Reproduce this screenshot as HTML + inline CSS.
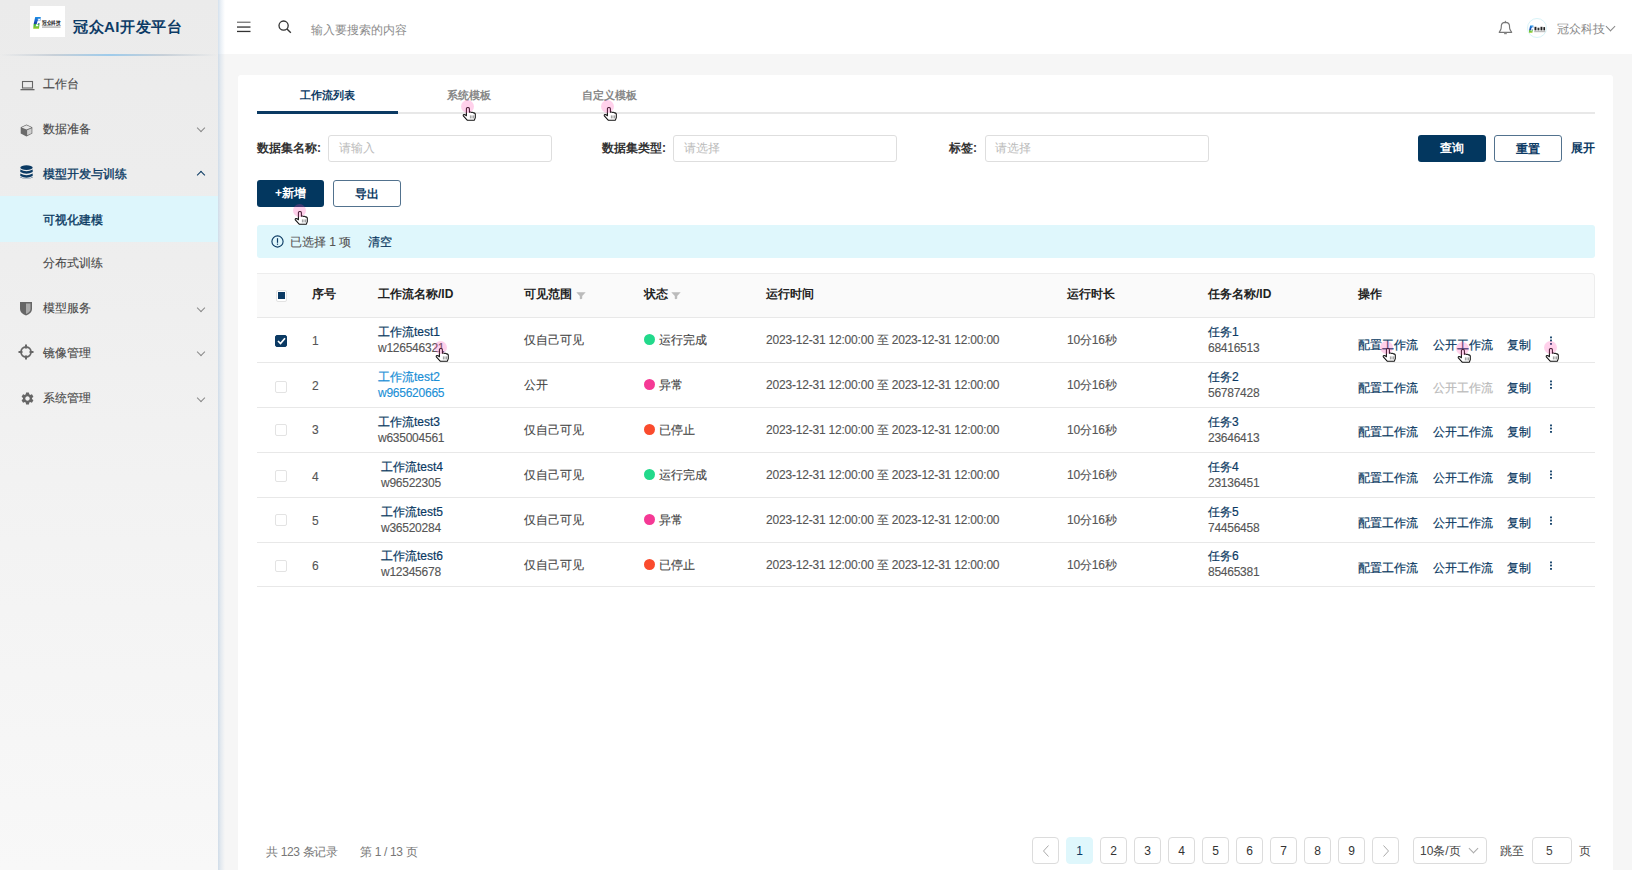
<!DOCTYPE html>
<html><head><meta charset="utf-8"><style>
*{box-sizing:border-box;margin:0;padding:0}
html,body{width:1632px;height:870px;overflow:hidden}
body{position:relative;background:#f6f6f6;font-family:"Liberation Sans",sans-serif;font-size:12px;color:#333}
.a{position:absolute;white-space:nowrap;line-height:12px;font-size:12px}
.m{-webkit-text-stroke:0.2px currentColor}
.m2{-webkit-text-stroke:0.12px currentColor}
#side{position:absolute;left:0;top:0;width:218px;height:870px;background:linear-gradient(to bottom,#ebebeb 0%,#eeeeee 30%,#f2f2f2 55%,#f8f8f8 100%)}
#sideshadow{position:absolute;left:218px;top:0;width:7px;height:870px;background:linear-gradient(to right,rgba(170,195,220,.5),rgba(190,208,226,.32) 40%,rgba(230,235,240,0))}
#hdr{position:absolute;left:218px;top:0;width:1414px;height:54px;background:#fff}
#card{position:absolute;left:238px;top:75px;width:1375px;height:800px;background:#fff;border-radius:3px}
.chev{position:absolute;width:6px;height:6px;border-right:1px solid #aaa;border-bottom:1px solid #aaa}
.inp{position:absolute;height:27px;width:224px;border:1px solid #dedede;border-radius:3px;background:#fff}
.btn{position:absolute;height:27px;border-radius:3px;text-align:center;font-size:12px;font-weight:bold;line-height:27px;white-space:nowrap}
.pri{background:#03375f;color:#fff}
.out{background:#fff;border:1px solid #52728e;color:#0b3a63;line-height:26px}
.rowl{position:absolute;left:257px;width:1338px;height:1px;background:#e8e8e8}
.th{font-weight:bold;color:#222}
.cb{position:absolute;width:12px;height:12px;border:1px solid #e3e3e3;border-radius:2px;background:#fff}
.dot{position:absolute;width:11px;height:11px;border-radius:50%}
.pg{position:absolute;top:837px;width:27px;height:27px;border:1px solid #dcdcdc;border-radius:4px;background:#fff;text-align:center;line-height:26px;font-size:12px;color:#333}
.cur{position:absolute;width:13px;height:13px;border-radius:50%;background:rgba(255,64,173,.24)}
</style></head><body>
<div id="side">
<div style="position:absolute;left:30px;top:6px;width:35px;height:31px;background:#fff"></div>
<svg style="position:absolute;left:30px;top:6px" width="35" height="31" viewBox="0 0 35 31">
<defs><linearGradient id="lg1" x1="0" y1="0" x2="0" y2="1"><stop offset="0" stop-color="#1a90e8"/><stop offset=".55" stop-color="#1b3fa8"/><stop offset=".56" stop-color="#28a84a"/><stop offset="1" stop-color="#9fd02a"/></linearGradient></defs>
<path d="M5.2 11 H10.8 L10.3 14.8 H7.6 L7.2 17.3 H9.6 L9 22.8 H3.2 L3.6 18.2 Z" fill="url(#lg1)"/>
<path d="M7.8 13.2 H9.6 L6.4 19.6 H8.3" stroke="#fff" stroke-width="1.1" fill="none"/>
<text x="12" y="18.8" font-size="6.2" font-weight="bold" fill="#2a2a2a" textLength="18.5" lengthAdjust="spacingAndGlyphs">冠众科技</text>
<rect x="12" y="20.3" width="18.5" height="1.6" fill="#888" opacity=".55"/>
</svg>
<div class="a" style="left:73px;top:19px;font-size:15px;line-height:15px;font-weight:bold;color:#0d3b66;letter-spacing:0.5px">冠众AI开发平台</div>
<div style="position:absolute;left:0;top:54px;width:218px;height:2px;background:linear-gradient(to right,rgba(200,210,220,0) 0%,rgba(170,185,200,.55) 25%,rgba(150,200,235,.9) 50%,rgba(170,185,200,.55) 75%,rgba(200,210,220,0) 100%)"></div>
<div style="position:absolute;left:0;top:196px;width:218px;height:46px;background:#ddf6fc"></div>
<div class="a m2" style="left:43px;top:78px;color:#484848">工作台</div>
<svg style="position:absolute;left:20px;top:80px" width="15" height="11" viewBox="0 0 15 11"><rect x="2.5" y="1.5" width="10" height="6.5" fill="none" stroke="#666" stroke-width="1.1"/><rect x="0.5" y="9" width="14" height="1.3" fill="#666"/></svg>
<div class="a m2" style="left:43px;top:123px;color:#484848">数据准备</div>
<svg style="position:absolute;left:20px;top:124px" width="13" height="13" viewBox="0 0 13 13"><path d="M6.5 0.6 L12.3 3.3 V9.6 L6.5 12.4 L0.7 9.6 V3.3 Z" fill="#6a6a6a"/><path d="M1.6 3.4 L6.5 1.2 L11.4 3.4 L6.5 5.6 Z" fill="#e6e6e6"/><path d="M7.1 6.3 L11.6 4.2 V9.2 L7.1 11.3 Z" fill="#d0d0d0"/></svg>
<div class="chev" style="left:198px;top:125.0px;transform:rotate(45deg);border-color:#8a8a8a"></div>
<div class="a" style="left:43px;top:168px;color:#0b3a63;-webkit-text-stroke:0.35px #0b3a63">模型开发与训练</div>
<svg style="position:absolute;left:20px;top:165px" width="13" height="15" viewBox="0 0 13 15"><ellipse cx="6.5" cy="2.6" rx="6.2" ry="2.3" fill="#0b3a63"/><path d="M0.3 4.5 Q6.5 8 12.7 4.5 V7 Q6.5 10.3 0.3 7 Z" fill="#0b3a63"/><path d="M0.3 8.5 Q6.5 12 12.7 8.5 V11 Q6.5 14.3 0.3 11 Z" fill="#0b3a63"/><path d="M0.3 12 Q6.5 15.3 12.7 12 V12.5 Q6.5 15.3 0.3 12.5 Z" fill="#0b3a63"/></svg>
<div class="chev" style="left:198px;top:171.5px;transform:rotate(225deg);border-color:#0b3a63;border-width:1.3px"></div>
<div class="a" style="left:43px;top:214px;color:#0b3a63;-webkit-text-stroke:0.35px #0b3a63">可视化建模</div>
<div class="a m2" style="left:43px;top:257px;color:#484848">分布式训练</div>
<div class="a m2" style="left:43px;top:302px;color:#484848">模型服务</div>
<svg style="position:absolute;left:19px;top:301px" width="14" height="15" viewBox="0 0 14 15"><path d="M1 1 H13 V8 Q13 12 7 14.5 Q1 12 1 8 Z" fill="#666"/><path d="M7 2.5 H11.5 V8 Q11.5 11 7 13 Z" fill="#aaa"/></svg>
<div class="chev" style="left:198px;top:304.5px;transform:rotate(45deg);border-color:#8a8a8a"></div>
<div class="a m2" style="left:43px;top:347px;color:#484848">镜像管理</div>
<svg style="position:absolute;left:18px;top:344px" width="16" height="16" viewBox="0 0 16 16"><circle cx="8" cy="8" r="5" fill="none" stroke="#666" stroke-width="1.8"/><rect x="7" y="0.5" width="2" height="4" fill="#666"/><rect x="7" y="11.5" width="2" height="4" fill="#666"/><rect x="0.5" y="7" width="4" height="2" fill="#666"/><rect x="11.5" y="7" width="4" height="2" fill="#666"/></svg>
<div class="chev" style="left:198px;top:349.0px;transform:rotate(45deg);border-color:#8a8a8a"></div>
<div class="a m2" style="left:43px;top:392px;color:#484848">系统管理</div>
<svg style="position:absolute;left:20px;top:391px" width="15" height="15" viewBox="0 0 24 24"><path fill="#666" d="M19.14 12.94c.04-.3.06-.61.06-.94 0-.32-.02-.64-.07-.94l2.03-1.58a.49.49 0 0 0 .12-.61l-1.92-3.32a.488.488 0 0 0-.59-.22l-2.39.96c-.5-.38-1.03-.7-1.62-.94l-.36-2.54a.484.484 0 0 0-.48-.41h-3.84c-.24 0-.43.17-.47.41l-.36 2.54c-.59.24-1.13.57-1.62.94l-2.39-.96c-.22-.08-.47 0-.59.22L2.74 8.87c-.12.21-.08.47.12.61l2.03 1.58c-.05.3-.09.63-.09.94s.02.64.07.94l-2.03 1.58a.49.49 0 0 0-.12.61l1.92 3.32c.12.22.37.29.59.22l2.39-.96c.5.38 1.03.7 1.62.94l.36 2.54c.05.24.24.41.48.41h3.84c.24 0 .44-.17.47-.41l.36-2.54c.59-.24 1.13-.56 1.62-.94l2.39.96c.22.08.47 0 .59-.22l1.92-3.32c.12-.22.07-.47-.12-.61l-2.01-1.58zM12 15.6c-1.98 0-3.6-1.62-3.6-3.6s1.62-3.6 3.6-3.6 3.6 1.62 3.6 3.6-1.62 3.6-3.6 3.6z"/></svg>
<div class="chev" style="left:198px;top:394.5px;transform:rotate(45deg);border-color:#8a8a8a"></div>
</div>
<div id="hdr"></div>
<div id="sideshadow"></div>
<svg style="position:absolute;left:237px;top:21px" width="14" height="12" viewBox="0 0 14 12"><rect x="0" y="0.6" width="13.5" height="1.3" fill="#777"/><rect x="0" y="5.4" width="13.5" height="1.3" fill="#333"/><rect x="0" y="9.8" width="13.5" height="1.3" fill="#333"/></svg>
<svg style="position:absolute;left:278px;top:20px" width="14" height="14" viewBox="0 0 14 14"><circle cx="5.6" cy="5.6" r="4.6" fill="none" stroke="#333" stroke-width="1.3"/><path d="M9 9 L12.8 12.8" stroke="#333" stroke-width="1.4"/></svg>
<div class="a" style="left:311px;top:24px;color:#8c8c8c">输入要搜索的内容</div>
<svg style="position:absolute;left:1497px;top:18px" width="17" height="18" viewBox="0 0 17 18"><path d="M8.4 2.6 L9.4 4.4 H7.4 Z" fill="#777"/><path d="M2.2 14.3 L3.8 11.6 Q4.3 10.2 4.3 8.6 V7.8 Q4.5 4.6 8.4 4.4 Q12.3 4.6 12.5 7.8 V8.6 Q12.5 10.2 13 11.6 L14.7 14.3 Z" fill="none" stroke="#777" stroke-width="1.15" stroke-linejoin="round"/><rect x="7.1" y="14.6" width="2.7" height="1.6" fill="#888"/></svg>
<div style="position:absolute;left:1527px;top:18px;width:20px;height:20px;border-radius:50%;border:1px solid #d8f3f8;background:#fff"></div>
<svg style="position:absolute;left:1527.2px;top:19.4px" width="21" height="18.6" viewBox="0 0 35 31">
<path d="M5.2 11 H10.8 L10.3 14.8 H7.6 L7.2 17.3 H9.6 L9 22.8 H3.2 L3.6 18.2 Z" fill="url(#lg1)"/>
<path d="M7.8 13.2 H9.6 L6.4 19.6 H8.3" stroke="#fff" stroke-width="1.1" fill="none"/>
<rect x="12.5" y="13" width="3.2" height="6" fill="#222"/><rect x="17.5" y="14.5" width="3.2" height="4.5" fill="#333"/><rect x="22.5" y="13" width="3.2" height="6" fill="#222"/><rect x="27.3" y="13.5" width="2.8" height="5.5" fill="#222"/>
<rect x="12" y="20.5" width="18.5" height="1.4" fill="#666" opacity=".6"/>
</svg>
<div class="a" style="left:1557px;top:23px;color:#888">冠众科技</div>
<div class="chev" style="left:1607px;top:23px;width:7px;height:7px;border-color:#888;transform:rotate(45deg)"></div>
<div id="card"></div>
<div style="position:absolute;left:257px;top:112px;width:1338px;height:2px;background:#e8e8e8"></div>
<div style="position:absolute;left:257px;top:111px;width:141px;height:3px;background:#0b3a63"></div>
<div class="a" style="left:257px;top:90px;width:141px;text-align:center;font-weight:bold;color:#0b3a63;font-size:11px;line-height:11px">工作流列表</div>
<div class="a" style="left:398px;top:90px;width:141px;text-align:center;font-weight:bold;color:#888;font-size:11px;line-height:11px">系统模板</div>
<div class="a" style="left:539px;top:90px;width:141px;text-align:center;font-weight:bold;color:#888;font-size:11px;line-height:11px">自定义模板</div>
<div class="a" style="left:257px;top:142px;font-weight:bold;color:#333">数据集名称:</div>
<div class="inp" style="left:328px;top:135px"></div>
<div class="a" style="left:339px;top:142px;color:#bbb">请输入</div>
<div class="a" style="left:602px;top:142px;font-weight:bold;color:#333">数据集类型:</div>
<div class="inp" style="left:673px;top:135px"></div>
<div class="a" style="left:684px;top:142px;color:#bbb">请选择</div>
<div class="a" style="left:949px;top:142px;font-weight:bold;color:#333">标签:</div>
<div class="inp" style="left:985px;top:135px"></div>
<div class="a" style="left:995px;top:142px;color:#bbb">请选择</div>
<div class="btn pri" style="left:1418px;top:135px;width:68px">查询</div>
<div class="btn out" style="left:1494px;top:135px;width:68px">重置</div>
<div class="a" style="left:1571px;top:142px;font-weight:bold;color:#0b3a63">展开</div>
<div class="btn pri" style="left:257px;top:180px;width:67px">+新增</div>
<div class="btn out" style="left:333px;top:180px;width:68px">导出</div>
<div style="position:absolute;left:257px;top:225px;width:1338px;height:33px;background:#dff7fc;border-radius:3px"></div>
<svg style="position:absolute;left:271px;top:235px" width="13" height="13" viewBox="0 0 13 13"><circle cx="6.5" cy="6.5" r="5.6" fill="none" stroke="#0b3a63" stroke-width="1.1"/><rect x="5.9" y="3.2" width="1.2" height="4.6" fill="#0b3a63"/><rect x="5.9" y="8.6" width="1.2" height="1.2" fill="#0b3a63"/></svg>
<div class="a m2" style="left:290px;top:236px;color:#555">已选择 1 项</div>
<div class="a m" style="left:368px;top:236px;color:#0b3a63">清空</div>
<div style="position:absolute;left:257px;top:273px;width:1338px;height:45px;background:#fafafa;border-top:1px solid #ededed;border-right:1px solid #ededed;border-bottom:1px solid #e8e8e8;border-top-right-radius:4px"></div>
<div class="cb" style="left:275.5px;top:290px;width:11.5px;height:11.5px;border-color:#e3e3e3"></div><div style="position:absolute;left:278px;top:292px;width:7px;height:7px;background:#0b3a63"></div>
<div class="a" style="left:312px;top:288px;font-weight:bold;color:#222">序号</div>
<div class="a" style="left:378px;top:288px;font-weight:bold;color:#222">工作流名称/ID</div>
<div class="a" style="left:524px;top:288px;font-weight:bold;color:#222">可见范围</div>
<div class="a" style="left:644px;top:288px;font-weight:bold;color:#222">状态</div>
<div class="a" style="left:766px;top:288px;font-weight:bold;color:#222">运行时间</div>
<div class="a" style="left:1067px;top:288px;font-weight:bold;color:#222">运行时长</div>
<div class="a" style="left:1208px;top:288px;font-weight:bold;color:#222">任务名称/ID</div>
<div class="a" style="left:1358px;top:288px;font-weight:bold;color:#222">操作</div>
<svg style="position:absolute;left:576px;top:292px" width="10" height="8" viewBox="0 0 10 8"><path d="M0.3 0.3 H9.7 L6.2 4 V6.5 Q5 7.6 3.8 6.8 V4 Z" fill="#bbb"/></svg>
<svg style="position:absolute;left:671px;top:292px" width="10" height="8" viewBox="0 0 10 8"><path d="M0.3 0.3 H9.7 L6.2 4 V6.5 Q5 7.6 3.8 6.8 V4 Z" fill="#bbb"/></svg>
<div class="rowl" style="top:362px"></div>
<div class="cb" style="left:275px;top:335px;background:#0b3a63;border-color:#0b3a63"></div><svg style="position:absolute;left:277px;top:337px" width="9" height="8" viewBox="0 0 9 8"><path d="M1 4 L3.5 6.5 L8 1.2" fill="none" stroke="#fff" stroke-width="1.7"/></svg>
<div class="a m2" style="left:312px;top:335px;color:#555">1</div>
<div class="a m" style="left:378px;top:326px;color:#0b3a63">工作流test1</div>
<div class="a m2" style="left:378px;top:342px;color:#555;letter-spacing:-0.25px">w126546321</div>
<div class="a m2" style="left:524px;top:334px;color:#444">仅自己可见</div>
<div class="dot" style="left:644px;top:334px;background:#22d98b"></div>
<div class="a m2" style="left:659px;top:334px;color:#444">运行完成</div>
<div class="a m2" style="left:766px;top:334px;color:#555;letter-spacing:-0.2px">2023-12-31 12:00:00 至 2023-12-31 12:00:00</div>
<div class="a m2" style="left:1067px;top:334px;color:#555;letter-spacing:-0.2px">10分16秒</div>
<div class="a m" style="left:1208px;top:326px;color:#0b3a63">任务1</div>
<div class="a m2" style="left:1208px;top:342px;color:#555;letter-spacing:-0.25px">68416513</div>
<div class="a m" style="left:1358px;top:339px;color:#0b3a63">配置工作流</div>
<div class="a m" style="left:1433px;top:339px;color:#0b3a63">公开工作流</div>
<div class="a m" style="left:1507px;top:339px;color:#0b3a63">复制</div>
<svg style="position:absolute;left:1549px;top:336px" width="4" height="10" viewBox="0 0 4 10"><rect x="1.1" y="0.5" width="1.8" height="1.8" fill="#0b3a63"/><rect x="1.1" y="3.6" width="1.8" height="1.8" fill="#0b3a63"/><rect x="1.1" y="7" width="1.8" height="1.8" fill="#0b3a63"/></svg>
<div class="rowl" style="top:407px"></div>
<div class="cb" style="left:275px;top:381px"></div>
<div class="a m2" style="left:312px;top:380px;color:#555">2</div>
<div class="a m" style="left:378px;top:371px;color:#1a8fd6">工作流test2</div>
<div class="a m2" style="left:378px;top:387px;color:#1a8fd6;letter-spacing:-0.25px">w965620665</div>
<div class="a m2" style="left:524px;top:379px;color:#444">公开</div>
<div class="dot" style="left:644px;top:379px;background:#f53995"></div>
<div class="a m2" style="left:659px;top:379px;color:#444">异常</div>
<div class="a m2" style="left:766px;top:379px;color:#555;letter-spacing:-0.2px">2023-12-31 12:00:00 至 2023-12-31 12:00:00</div>
<div class="a m2" style="left:1067px;top:379px;color:#555;letter-spacing:-0.2px">10分16秒</div>
<div class="a m" style="left:1208px;top:371px;color:#0b3a63">任务2</div>
<div class="a m2" style="left:1208px;top:387px;color:#555;letter-spacing:-0.25px">56787428</div>
<div class="a m" style="left:1358px;top:382px;color:#0b3a63">配置工作流</div>
<div class="a m" style="left:1433px;top:382px;color:#bbb">公开工作流</div>
<div class="a m" style="left:1507px;top:382px;color:#0b3a63">复制</div>
<svg style="position:absolute;left:1549px;top:379.5px" width="4" height="10" viewBox="0 0 4 10"><rect x="1.1" y="0.5" width="1.8" height="1.8" fill="#0b3a63"/><rect x="1.1" y="3.6" width="1.8" height="1.8" fill="#0b3a63"/><rect x="1.1" y="7" width="1.8" height="1.8" fill="#0b3a63"/></svg>
<div class="rowl" style="top:452px"></div>
<div class="cb" style="left:275px;top:424px"></div>
<div class="a m2" style="left:312px;top:424px;color:#555">3</div>
<div class="a m" style="left:378px;top:416px;color:#0b3a63">工作流test3</div>
<div class="a m2" style="left:378px;top:432px;color:#555;letter-spacing:-0.25px">w635004561</div>
<div class="a m2" style="left:524px;top:424px;color:#444">仅自己可见</div>
<div class="dot" style="left:644px;top:424px;background:#fa4b2d"></div>
<div class="a m2" style="left:659px;top:424px;color:#444">已停止</div>
<div class="a m2" style="left:766px;top:424px;color:#555;letter-spacing:-0.2px">2023-12-31 12:00:00 至 2023-12-31 12:00:00</div>
<div class="a m2" style="left:1067px;top:424px;color:#555;letter-spacing:-0.2px">10分16秒</div>
<div class="a m" style="left:1208px;top:416px;color:#0b3a63">任务3</div>
<div class="a m2" style="left:1208px;top:432px;color:#555;letter-spacing:-0.25px">23646413</div>
<div class="a m" style="left:1358px;top:426px;color:#0b3a63">配置工作流</div>
<div class="a m" style="left:1433px;top:426px;color:#0b3a63">公开工作流</div>
<div class="a m" style="left:1507px;top:426px;color:#0b3a63">复制</div>
<svg style="position:absolute;left:1549px;top:423.5px" width="4" height="10" viewBox="0 0 4 10"><rect x="1.1" y="0.5" width="1.8" height="1.8" fill="#0b3a63"/><rect x="1.1" y="3.6" width="1.8" height="1.8" fill="#0b3a63"/><rect x="1.1" y="7" width="1.8" height="1.8" fill="#0b3a63"/></svg>
<div class="rowl" style="top:497px"></div>
<div class="cb" style="left:275px;top:470px"></div>
<div class="a m2" style="left:312px;top:471px;color:#555">4</div>
<div class="a m" style="left:381px;top:461px;color:#0b3a63">工作流test4</div>
<div class="a m2" style="left:381px;top:477px;color:#555;letter-spacing:-0.25px">w96522305</div>
<div class="a m2" style="left:524px;top:469px;color:#444">仅自己可见</div>
<div class="dot" style="left:644px;top:469px;background:#22d98b"></div>
<div class="a m2" style="left:659px;top:469px;color:#444">运行完成</div>
<div class="a m2" style="left:766px;top:469px;color:#555;letter-spacing:-0.2px">2023-12-31 12:00:00 至 2023-12-31 12:00:00</div>
<div class="a m2" style="left:1067px;top:469px;color:#555;letter-spacing:-0.2px">10分16秒</div>
<div class="a m" style="left:1208px;top:461px;color:#0b3a63">任务4</div>
<div class="a m2" style="left:1208px;top:477px;color:#555;letter-spacing:-0.25px">23136451</div>
<div class="a m" style="left:1358px;top:472px;color:#0b3a63">配置工作流</div>
<div class="a m" style="left:1433px;top:472px;color:#0b3a63">公开工作流</div>
<div class="a m" style="left:1507px;top:472px;color:#0b3a63">复制</div>
<svg style="position:absolute;left:1549px;top:469.5px" width="4" height="10" viewBox="0 0 4 10"><rect x="1.1" y="0.5" width="1.8" height="1.8" fill="#0b3a63"/><rect x="1.1" y="3.6" width="1.8" height="1.8" fill="#0b3a63"/><rect x="1.1" y="7" width="1.8" height="1.8" fill="#0b3a63"/></svg>
<div class="rowl" style="top:542px"></div>
<div class="cb" style="left:275px;top:514px"></div>
<div class="a m2" style="left:312px;top:515px;color:#555">5</div>
<div class="a m" style="left:381px;top:506px;color:#0b3a63">工作流test5</div>
<div class="a m2" style="left:381px;top:522px;color:#555;letter-spacing:-0.25px">w36520284</div>
<div class="a m2" style="left:524px;top:514px;color:#444">仅自己可见</div>
<div class="dot" style="left:644px;top:514px;background:#f53995"></div>
<div class="a m2" style="left:659px;top:514px;color:#444">异常</div>
<div class="a m2" style="left:766px;top:514px;color:#555;letter-spacing:-0.2px">2023-12-31 12:00:00 至 2023-12-31 12:00:00</div>
<div class="a m2" style="left:1067px;top:514px;color:#555;letter-spacing:-0.2px">10分16秒</div>
<div class="a m" style="left:1208px;top:506px;color:#0b3a63">任务5</div>
<div class="a m2" style="left:1208px;top:522px;color:#555;letter-spacing:-0.25px">74456458</div>
<div class="a m" style="left:1358px;top:517px;color:#0b3a63">配置工作流</div>
<div class="a m" style="left:1433px;top:517px;color:#0b3a63">公开工作流</div>
<div class="a m" style="left:1507px;top:517px;color:#0b3a63">复制</div>
<svg style="position:absolute;left:1549px;top:515.5px" width="4" height="10" viewBox="0 0 4 10"><rect x="1.1" y="0.5" width="1.8" height="1.8" fill="#0b3a63"/><rect x="1.1" y="3.6" width="1.8" height="1.8" fill="#0b3a63"/><rect x="1.1" y="7" width="1.8" height="1.8" fill="#0b3a63"/></svg>
<div class="rowl" style="top:586px"></div>
<div class="cb" style="left:275px;top:560px"></div>
<div class="a m2" style="left:312px;top:560px;color:#555">6</div>
<div class="a m" style="left:381px;top:550px;color:#0b3a63">工作流test6</div>
<div class="a m2" style="left:381px;top:566px;color:#555;letter-spacing:-0.25px">w12345678</div>
<div class="a m2" style="left:524px;top:559px;color:#444">仅自己可见</div>
<div class="dot" style="left:644px;top:559px;background:#fa4b2d"></div>
<div class="a m2" style="left:659px;top:559px;color:#444">已停止</div>
<div class="a m2" style="left:766px;top:559px;color:#555;letter-spacing:-0.2px">2023-12-31 12:00:00 至 2023-12-31 12:00:00</div>
<div class="a m2" style="left:1067px;top:559px;color:#555;letter-spacing:-0.2px">10分16秒</div>
<div class="a m" style="left:1208px;top:550px;color:#0b3a63">任务6</div>
<div class="a m2" style="left:1208px;top:566px;color:#555;letter-spacing:-0.25px">85465381</div>
<div class="a m" style="left:1358px;top:562px;color:#0b3a63">配置工作流</div>
<div class="a m" style="left:1433px;top:562px;color:#0b3a63">公开工作流</div>
<div class="a m" style="left:1507px;top:562px;color:#0b3a63">复制</div>
<svg style="position:absolute;left:1549px;top:561px" width="4" height="10" viewBox="0 0 4 10"><rect x="1.1" y="0.5" width="1.8" height="1.8" fill="#0b3a63"/><rect x="1.1" y="3.6" width="1.8" height="1.8" fill="#0b3a63"/><rect x="1.1" y="7" width="1.8" height="1.8" fill="#0b3a63"/></svg>
<div class="a" style="left:266px;top:846px;color:#777;letter-spacing:-0.35px">共 123 条记录</div>
<div class="a" style="left:360px;top:846px;color:#777;letter-spacing:-0.35px">第 1 / 13 页</div>
<div class="pg" style="left:1032px"><svg width="8" height="12" viewBox="0 0 8 12" style="margin-top:7px"><path d="M6.5 .5 L1.5 6 L6.5 11.5" fill="none" stroke="#aaa" stroke-width="1"/></svg></div>
<div class="pg" style="left:1066px;background:#dff7fc;border-color:#dff7fc;color:#0b3a63">1</div>
<div class="pg" style="left:1100px">2</div>
<div class="pg" style="left:1134px">3</div>
<div class="pg" style="left:1168px">4</div>
<div class="pg" style="left:1202px">5</div>
<div class="pg" style="left:1236px">6</div>
<div class="pg" style="left:1270px">7</div>
<div class="pg" style="left:1304px">8</div>
<div class="pg" style="left:1338px">9</div>
<div class="pg" style="left:1372px"><svg width="8" height="12" viewBox="0 0 8 12" style="margin-top:7px"><path d="M1.5 .5 L6.5 6 L1.5 11.5" fill="none" stroke="#aaa" stroke-width="1"/></svg></div>
<div style="position:absolute;left:1413px;top:837px;width:74px;height:27px;border:1px solid #dcdcdc;border-radius:4px;background:#fff"></div>
<div class="a" style="left:1420px;top:845px;color:#444">10条/页</div>
<div class="chev" style="left:1470px;top:845px;width:7px;height:7px;transform:rotate(45deg)"></div>
<div class="a" style="left:1500px;top:845px;color:#444">跳至</div>
<div style="position:absolute;left:1532px;top:837px;width:40px;height:27px;border:1px solid #dcdcdc;border-radius:4px;background:#fff"></div>
<div class="a" style="left:1546px;top:845px;color:#444">5</div>
<div class="a" style="left:1579px;top:845px;color:#444">页</div>
<svg style="position:absolute;left:462.4px;top:107.2px" width="14" height="15" viewBox="0 0 14 15"><path d="M4.4 8.8 V1.8 Q4.4 0.5 5.9 0.5 Q7.4 0.5 7.4 1.8 V5.2 Q8.6 4.6 9.5 5.4 Q10.6 4.9 11.5 5.9 Q12.9 5.6 13.3 7 V10.6 L12.4 13.2 H5.2 L1.3 8.8 Q0.9 7.7 2 7.5 Q3.2 7.5 4.4 8.8 Z" fill="#fff" stroke="#111" stroke-width="1.05" stroke-linejoin="round"/><path d="M8.4 8.4 V11.4 M10 8.4 V11.4 M11.6 8.4 V11.4" stroke="#888" stroke-width=".85"/></svg>
<div class="cur" style="left:460.9px;top:100.2px"></div>
<svg style="position:absolute;left:602.8px;top:107.4px" width="14" height="15" viewBox="0 0 14 15"><path d="M4.4 8.8 V1.8 Q4.4 0.5 5.9 0.5 Q7.4 0.5 7.4 1.8 V5.2 Q8.6 4.6 9.5 5.4 Q10.6 4.9 11.5 5.9 Q12.9 5.6 13.3 7 V10.6 L12.4 13.2 H5.2 L1.3 8.8 Q0.9 7.7 2 7.5 Q3.2 7.5 4.4 8.8 Z" fill="#fff" stroke="#111" stroke-width="1.05" stroke-linejoin="round"/><path d="M8.4 8.4 V11.4 M10 8.4 V11.4 M11.6 8.4 V11.4" stroke="#888" stroke-width=".85"/></svg>
<div class="cur" style="left:601.3px;top:100.4px"></div>
<svg style="position:absolute;left:294.1px;top:210.6px" width="14" height="15" viewBox="0 0 14 15"><path d="M4.4 8.8 V1.8 Q4.4 0.5 5.9 0.5 Q7.4 0.5 7.4 1.8 V5.2 Q8.6 4.6 9.5 5.4 Q10.6 4.9 11.5 5.9 Q12.9 5.6 13.3 7 V10.6 L12.4 13.2 H5.2 L1.3 8.8 Q0.9 7.7 2 7.5 Q3.2 7.5 4.4 8.8 Z" fill="#fff" stroke="#111" stroke-width="1.05" stroke-linejoin="round"/><path d="M8.4 8.4 V11.4 M10 8.4 V11.4 M11.6 8.4 V11.4" stroke="#888" stroke-width=".85"/></svg>
<div class="cur" style="left:292.6px;top:203.6px"></div>
<svg style="position:absolute;left:435.3px;top:348.1px" width="14" height="15" viewBox="0 0 14 15"><path d="M4.4 8.8 V1.8 Q4.4 0.5 5.9 0.5 Q7.4 0.5 7.4 1.8 V5.2 Q8.6 4.6 9.5 5.4 Q10.6 4.9 11.5 5.9 Q12.9 5.6 13.3 7 V10.6 L12.4 13.2 H5.2 L1.3 8.8 Q0.9 7.7 2 7.5 Q3.2 7.5 4.4 8.8 Z" fill="#fff" stroke="#111" stroke-width="1.05" stroke-linejoin="round"/><path d="M8.4 8.4 V11.4 M10 8.4 V11.4 M11.6 8.4 V11.4" stroke="#888" stroke-width=".85"/></svg>
<div class="cur" style="left:433.8px;top:341.1px"></div>
<svg style="position:absolute;left:1381.5px;top:348.4px" width="14" height="15" viewBox="0 0 14 15"><path d="M4.4 8.8 V1.8 Q4.4 0.5 5.9 0.5 Q7.4 0.5 7.4 1.8 V5.2 Q8.6 4.6 9.5 5.4 Q10.6 4.9 11.5 5.9 Q12.9 5.6 13.3 7 V10.6 L12.4 13.2 H5.2 L1.3 8.8 Q0.9 7.7 2 7.5 Q3.2 7.5 4.4 8.8 Z" fill="#fff" stroke="#111" stroke-width="1.05" stroke-linejoin="round"/><path d="M8.4 8.4 V11.4 M10 8.4 V11.4 M11.6 8.4 V11.4" stroke="#888" stroke-width=".85"/></svg>
<div class="cur" style="left:1380.0px;top:341.4px"></div>
<svg style="position:absolute;left:1457.1px;top:348.6px" width="14" height="15" viewBox="0 0 14 15"><path d="M4.4 8.8 V1.8 Q4.4 0.5 5.9 0.5 Q7.4 0.5 7.4 1.8 V5.2 Q8.6 4.6 9.5 5.4 Q10.6 4.9 11.5 5.9 Q12.9 5.6 13.3 7 V10.6 L12.4 13.2 H5.2 L1.3 8.8 Q0.9 7.7 2 7.5 Q3.2 7.5 4.4 8.8 Z" fill="#fff" stroke="#111" stroke-width="1.05" stroke-linejoin="round"/><path d="M8.4 8.4 V11.4 M10 8.4 V11.4 M11.6 8.4 V11.4" stroke="#888" stroke-width=".85"/></svg>
<div class="cur" style="left:1455.6px;top:341.6px"></div>
<svg style="position:absolute;left:1545.3px;top:348.4px" width="14" height="15" viewBox="0 0 14 15"><path d="M4.4 8.8 V1.8 Q4.4 0.5 5.9 0.5 Q7.4 0.5 7.4 1.8 V5.2 Q8.6 4.6 9.5 5.4 Q10.6 4.9 11.5 5.9 Q12.9 5.6 13.3 7 V10.6 L12.4 13.2 H5.2 L1.3 8.8 Q0.9 7.7 2 7.5 Q3.2 7.5 4.4 8.8 Z" fill="#fff" stroke="#111" stroke-width="1.05" stroke-linejoin="round"/><path d="M8.4 8.4 V11.4 M10 8.4 V11.4 M11.6 8.4 V11.4" stroke="#888" stroke-width=".85"/></svg>
<div class="cur" style="left:1543.8px;top:341.4px"></div>
</body></html>
